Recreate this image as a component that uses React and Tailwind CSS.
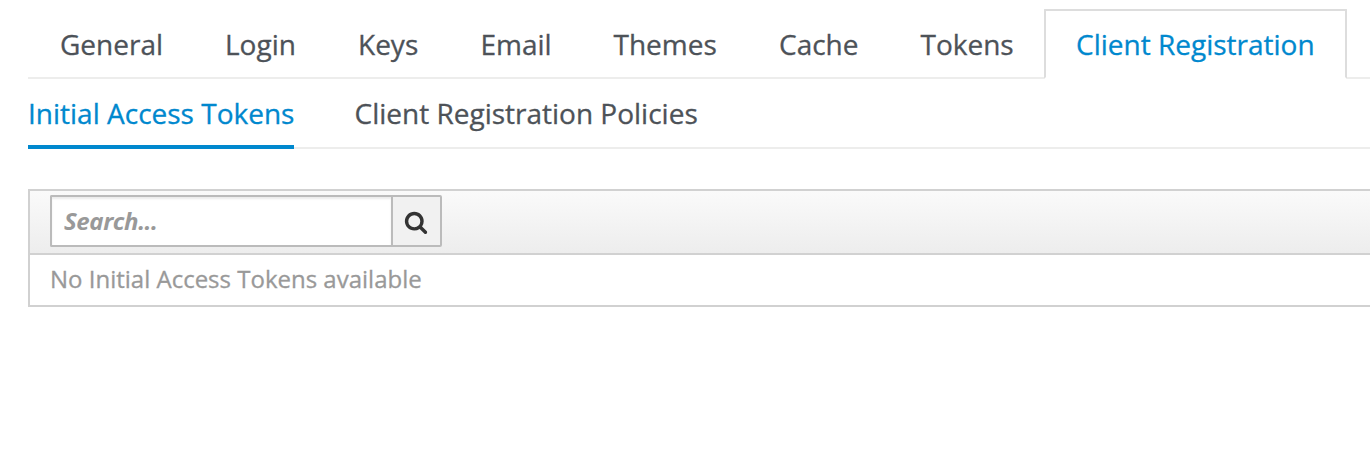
import React from "react";

const tabs = [
  ["General", "w-[165px]"],
  ["Login", "w-[133px]"],
  ["Keys", "w-[122.5px]"],
  ["Email", "w-[133px]"],
  ["Themes", "w-[165.5px]"],
  ["Cache", "w-[141.5px]"],
  ["Tokens", "w-[155.5px]"],
];

function SearchIcon() {
  return (
    <svg viewBox="0 0 1792 1792" className="mr-px mt-px size-6 shrink-0" fill="currentColor" aria-hidden="true">
      <path d="M1216 832q0-185-131.500-316.500t-316.500-131.500-316.500 131.500-131.500 316.500 131.500 316.500 316.500 131.500 316.500-131.500 131.500-316.500zm512 832q0 52-38 90t-90 38q-54 0-90-38l-343-342q-179 124-399 124-143 0-273.500-55.500t-225-150-150-225-55.500-273.500 55.500-273.500 150-225 225-150 273.500-55.500 273.500 55.500 225 150 150 225 55.500 273.500q0 220-124 399l343 343q37 37 37 90z" />
    </svg>
  );
}

export default function App() {
  return (
    <main className="h-[468px] overflow-hidden bg-white pl-7 pt-[9px] font-['Open_Sans',sans-serif] text-[28px] leading-[40px] text-[#4d5258] [-webkit-text-stroke:0.3px_currentColor]">
      <nav className="flex h-[70px] border-b-2 border-[#ededec]">
        {tabs.map(([label, width]) => (
          <a key={label} className={`${width} shrink-0 whitespace-nowrap pl-8 pt-[15px]`}>{label}</a>
        ))}
        <a className="h-[70px] w-[303px] shrink-0 whitespace-nowrap rounded-[1px] border-2 border-[#dddddd] border-b-white bg-white pl-[30px] pt-[13px] text-[#0088ce]">Client Registration</a>
      </nav>
      <nav className="flex h-[70px] border-b-2 border-[#ededec]">
        <a className="h-[70px] w-[266px] shrink-0 whitespace-nowrap border-b-4 border-[#0088ce] pt-[14px] text-[#0088ce]">Initial Access Tokens</a>
        <a className="ml-[60.5px] whitespace-nowrap pt-[14px]">Client Registration Policies</a>
      </nav>
      <section className="mt-10 h-[118px] border-2 border-r-0 border-[#d1d1d1]">
        <div className="flex h-[64px] border-b-2 border-[#d1d1d1] bg-linear-to-b from-[#fafafa] to-[#ededed] pl-5 pt-1">
          <input aria-label="Search" placeholder="Search..." className="h-[52px] w-[341px] rounded-l-[2px] border-2 border-r-0 border-[#bbbbbb] bg-white pb-0.5 pl-3 text-[24px] font-bold italic tracking-[-0.4px] shadow-[inset_0_2px_2px_rgba(3,3,3,0.075)] outline-none [-webkit-text-stroke:0px] placeholder:text-[#999999]" />
          <button aria-label="Submit search" className="flex h-[52px] w-[51px] items-center justify-center rounded-r-[2px] border-2 border-[#bbbbbb] bg-[#f1f1f1] text-[#333333]">
            <SearchIcon />
          </button>
        </div>
        <p className="pl-5 pt-1 text-[24px] text-[#999999]">No Initial Access Tokens available</p>
      </section>
    </main>
  );
}
